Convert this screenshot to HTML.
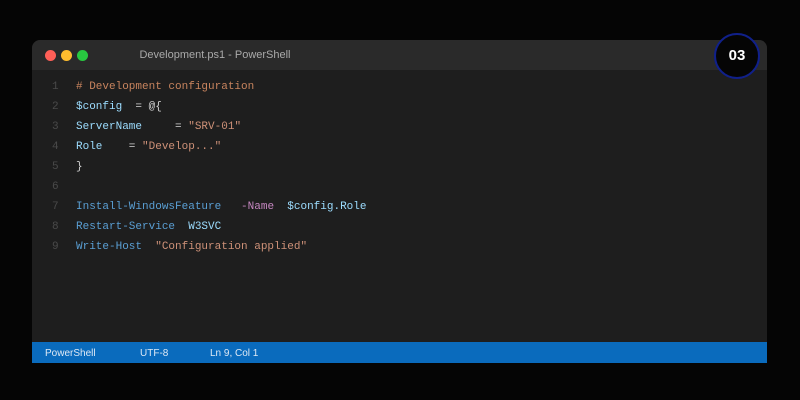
<!DOCTYPE html>
<html><head><style>
body{margin:0;width:800px;height:400px;background:#050505;overflow:hidden;position:relative;font-family:"Liberation Sans",sans-serif}
.win{position:absolute;left:32px;top:40px;width:735px;height:323px;background:#1e1e1e;border-radius:8px 8px 0 0;overflow:hidden}
.tb{height:30px;background:#2a2a2a;position:relative}
.dot{position:absolute;top:10px;width:11px;height:11px;border-radius:50%}
.title{position:absolute;left:0;width:366px;text-align:center;top:9px;font-size:11px;color:#aaa}
.code{position:absolute;left:0;top:37px;font-family:"Liberation Mono",monospace;font-size:11px}
.ln{position:absolute;left:0;height:20px;line-height:20px;white-space:pre;color:#ccc}
.n{display:inline-block;width:44px;text-align:left;padding-left:20px;box-sizing:border-box;color:#4a4a4a}
.c{color:#c8845e}.v{color:#9cdcfe}.k{color:#5a9fd4}.p{color:#c586c0}.s{color:#ce9178}.o{color:#d4d4d4}
.sb{position:absolute;left:0;bottom:0;width:100%;height:21px;background:#0a6bbd;color:#dfe9f5;font-size:10px;line-height:23px}
.sb span{position:absolute}
.badge{position:absolute;left:715px;top:34px;width:42px;height:42px;border-radius:50%;border:2px solid #10208a;background:#050505;color:#fff;font-weight:bold;font-size:15px;text-align:center;line-height:42px;box-sizing:content-box;margin-left:-1px;margin-top:-1px}
</style></head><body>
<div class="win">
<div class="tb">
<div class="dot" style="left:13px;background:#ff5f57"></div>
<div class="dot" style="left:29px;background:#febc2e"></div>
<div class="dot" style="left:45px;background:#28c840"></div>
<div class="title">Development.ps1 - PowerShell</div>
</div>
<div class="code">
<div class="ln" style="top:0"><span class="n">1</span><span class="c"># Development configuration</span></div>
<div class="ln" style="top:20px"><span class="n">2</span><span class="v">$config</span><span class="o">  = @{</span></div>
<div class="ln" style="top:40px"><span class="n">3</span><span class="v">ServerName</span><span class="o">     = </span><span class="s">"SRV-01"</span></div>
<div class="ln" style="top:60px"><span class="n">4</span><span class="v">Role</span><span class="o">    = </span><span class="s">"Develop..."</span></div>
<div class="ln" style="top:80px"><span class="n">5</span><span class="o">}</span></div>
<div class="ln" style="top:100px"><span class="n">6</span></div>
<div class="ln" style="top:120px"><span class="n">7</span><span class="k">Install-WindowsFeature</span>   <span class="p">-Name</span>  <span class="v">$config.Role</span></div>
<div class="ln" style="top:140px"><span class="n">8</span><span class="k">Restart-Service</span>  <span class="v">W3SVC</span></div>
<div class="ln" style="top:160px"><span class="n">9</span><span class="k">Write-Host</span>  <span class="s">"Configuration applied"</span></div>
</div>
<div class="sb"><span style="left:13px">PowerShell</span><span style="left:108px">UTF-8</span><span style="left:178px">Ln 9, Col 1</span></div>
</div>
<div class="badge">03</div>
</body></html>
